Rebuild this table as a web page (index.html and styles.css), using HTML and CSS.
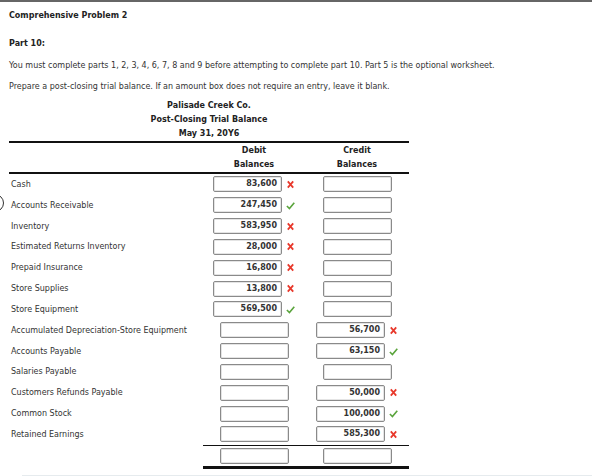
FILE: index.html
```html
<!DOCTYPE html>
<html>
<head>
<meta charset="utf-8">
<link rel="stylesheet" href="styles.css">
</head>
<body>
<div class="page">
  <span class="circle"></span>
  <h1 class="title">Comprehensive Problem 2</h1>
  <h2 class="part">Part 10:</h2>
  <p class="para">You must complete parts 1, 2, 3, 4, 6, 7, 8 and 9 before attempting to complete part 10. Part 5 is the optional worksheet.</p>
  <p class="para">Prepare a post-closing trial balance. If an amount box does not require an entry, leave it blank.</p>

  <div class="sheet">
    <div class="heading">
      <div>Palisade Creek Co.</div>
      <div>Post-Closing Trial Balance</div>
      <div>May 31, 20Y6</div>
    </div>
    <div class="colhead">
      <div></div>
      <div class="ch">Debit<br>Balances</div>
      <div class="ch">Credit<br>Balances</div>
    </div>
    <div class="rows">
      <div class="row"><div class="lbl">Cash</div><div class="cell"><span class="box">83,600</span><svg class="ic" viewBox="0 0 10 10"><path d="M2 1.5L8 8.5M8 1.5L2 8.5" stroke="#e8392c" stroke-width="2"/></svg></div><div class="cell"><span class="box"></span></div></div>
      <div class="row"><div class="lbl">Accounts Receivable</div><div class="cell"><span class="box">247,450</span><svg class="ic" viewBox="0 0 10 10"><path d="M1 5.5L3.8 8.3L9.2 2" stroke="#5aa43c" stroke-width="1.8" fill="none"/></svg></div><div class="cell"><span class="box"></span></div></div>
      <div class="row"><div class="lbl">Inventory</div><div class="cell"><span class="box">583,950</span><svg class="ic" viewBox="0 0 10 10"><path d="M2 1.5L8 8.5M8 1.5L2 8.5" stroke="#e8392c" stroke-width="2"/></svg></div><div class="cell"><span class="box"></span></div></div>
      <div class="row"><div class="lbl">Estimated Returns Inventory</div><div class="cell"><span class="box">28,000</span><svg class="ic" viewBox="0 0 10 10"><path d="M2 1.5L8 8.5M8 1.5L2 8.5" stroke="#e8392c" stroke-width="2"/></svg></div><div class="cell"><span class="box"></span></div></div>
      <div class="row"><div class="lbl">Prepaid Insurance</div><div class="cell"><span class="box">16,800</span><svg class="ic" viewBox="0 0 10 10"><path d="M2 1.5L8 8.5M8 1.5L2 8.5" stroke="#e8392c" stroke-width="2"/></svg></div><div class="cell"><span class="box"></span></div></div>
      <div class="row"><div class="lbl">Store Supplies</div><div class="cell"><span class="box">13,800</span><svg class="ic" viewBox="0 0 10 10"><path d="M2 1.5L8 8.5M8 1.5L2 8.5" stroke="#e8392c" stroke-width="2"/></svg></div><div class="cell"><span class="box"></span></div></div>
      <div class="row"><div class="lbl">Store Equipment</div><div class="cell"><span class="box">569,500</span><svg class="ic" viewBox="0 0 10 10"><path d="M1 5.5L3.8 8.3L9.2 2" stroke="#5aa43c" stroke-width="1.8" fill="none"/></svg></div><div class="cell"><span class="box"></span></div></div>
      <div class="row"><div class="lbl">Accumulated Depreciation-Store Equipment</div><div class="cell"><span class="box"></span></div><div class="cell"><span class="box">56,700</span><svg class="ic" viewBox="0 0 10 10"><path d="M2 1.5L8 8.5M8 1.5L2 8.5" stroke="#e8392c" stroke-width="2"/></svg></div></div>
      <div class="row"><div class="lbl">Accounts Payable</div><div class="cell"><span class="box"></span></div><div class="cell"><span class="box">63,150</span><svg class="ic" viewBox="0 0 10 10"><path d="M1 5.5L3.8 8.3L9.2 2" stroke="#5aa43c" stroke-width="1.8" fill="none"/></svg></div></div>
      <div class="row"><div class="lbl">Salaries Payable</div><div class="cell"><span class="box"></span></div><div class="cell"><span class="box"></span></div></div>
      <div class="row"><div class="lbl">Customers Refunds Payable</div><div class="cell"><span class="box"></span></div><div class="cell"><span class="box">50,000</span><svg class="ic" viewBox="0 0 10 10"><path d="M2 1.5L8 8.5M8 1.5L2 8.5" stroke="#e8392c" stroke-width="2"/></svg></div></div>
      <div class="row"><div class="lbl">Common Stock</div><div class="cell"><span class="box"></span></div><div class="cell"><span class="box">100,000</span><svg class="ic" viewBox="0 0 10 10"><path d="M1 5.5L3.8 8.3L9.2 2" stroke="#5aa43c" stroke-width="1.8" fill="none"/></svg></div></div>
      <div class="row"><div class="lbl">Retained Earnings</div><div class="cell"><span class="box"></span></div><div class="cell"><span class="box">585,300</span><svg class="ic" viewBox="0 0 10 10"><path d="M2 1.5L8 8.5M8 1.5L2 8.5" stroke="#e8392c" stroke-width="2"/></svg></div></div>
    </div>
    <div class="total">
      <div></div>
      <div class="tcells">
        <div class="cell"><span class="box"></span></div>
        <div class="cell"><span class="box"></span></div>
      </div>
    </div>
  </div>
  <div class="footer"></div>
</div>
</body>
</html>
```

FILE: styles.css
```css
* { box-sizing: border-box; }
html, body { margin: 0; padding: 0; background: #fff; }
body {
  font-family: "DejaVu Sans", Verdana, sans-serif;
  font-size: 8px;
  color: #333;
  overflow: hidden;
}
.page {
  position: relative;
  border-top: 2px solid #666;
  padding: 9px 0 0 9px;
  height: 476px;
}
.circle {
  position: absolute;
  left: -14px;
  top: 192px;
  width: 18px;
  height: 18px;
  border: 1.5px solid #333;
  border-radius: 50%;
}
.title {
  margin: 0;
  font-size: 8px;
  font-weight: bold;
  line-height: 10px;
  color: #222;
}
.part {
  margin: 18px 0 0 0;
  font-size: 8px;
  font-weight: bold;
  line-height: 10px;
  color: #222;
}
.para {
  margin: 12px 0 0 0;
  line-height: 10px;
}
.para + .para { margin-top: 11px; }
.sheet {
  width: 400px;
  margin-top: 7px;
}
.heading {
  text-align: center;
  font-weight: bold;
  color: #222;
  line-height: 14px;
}
.colhead {
  display: grid;
  grid-template-columns: 194px 102px 104px;
  border-top: 2px solid #111;
  border-bottom: 2px solid #111;
  padding: 1px 0 0;
}
.ch {
  text-align: center;
  font-weight: bold;
  color: #222;
  line-height: 14px;
}
.row {
  display: grid;
  grid-template-columns: 194px 102px 104px;
  height: 20.83px;
  align-items: center;
}
.lbl { padding-left: 2px; }
.cell {
  display: flex;
  align-items: center;
  justify-content: center;
  gap: 4px;
}
.box {
  display: inline-block;
  width: 69px;
  height: 16px;
  border: 1px solid #8a8a8a;
  border-radius: 2px;
  box-shadow: inset 0 0 0 1px #e4e4e4;
  text-align: right;
  font-weight: bold;
  color: #333;
  line-height: 14px;
  padding-right: 4px;
}
.ic { width: 9px; height: 9px; }
.total {
  display: grid;
  grid-template-columns: 194px 206px;
}
.tcells {
  display: grid;
  grid-template-columns: 102px 104px;
  border-top: 1px solid #111;
  border-bottom: 3px solid #111;
  height: 24px;
  align-items: center;
}
.footer {
  margin: 6px 0 0 13px;
  height: 20px;
  background: #e6ebee;
}
```
